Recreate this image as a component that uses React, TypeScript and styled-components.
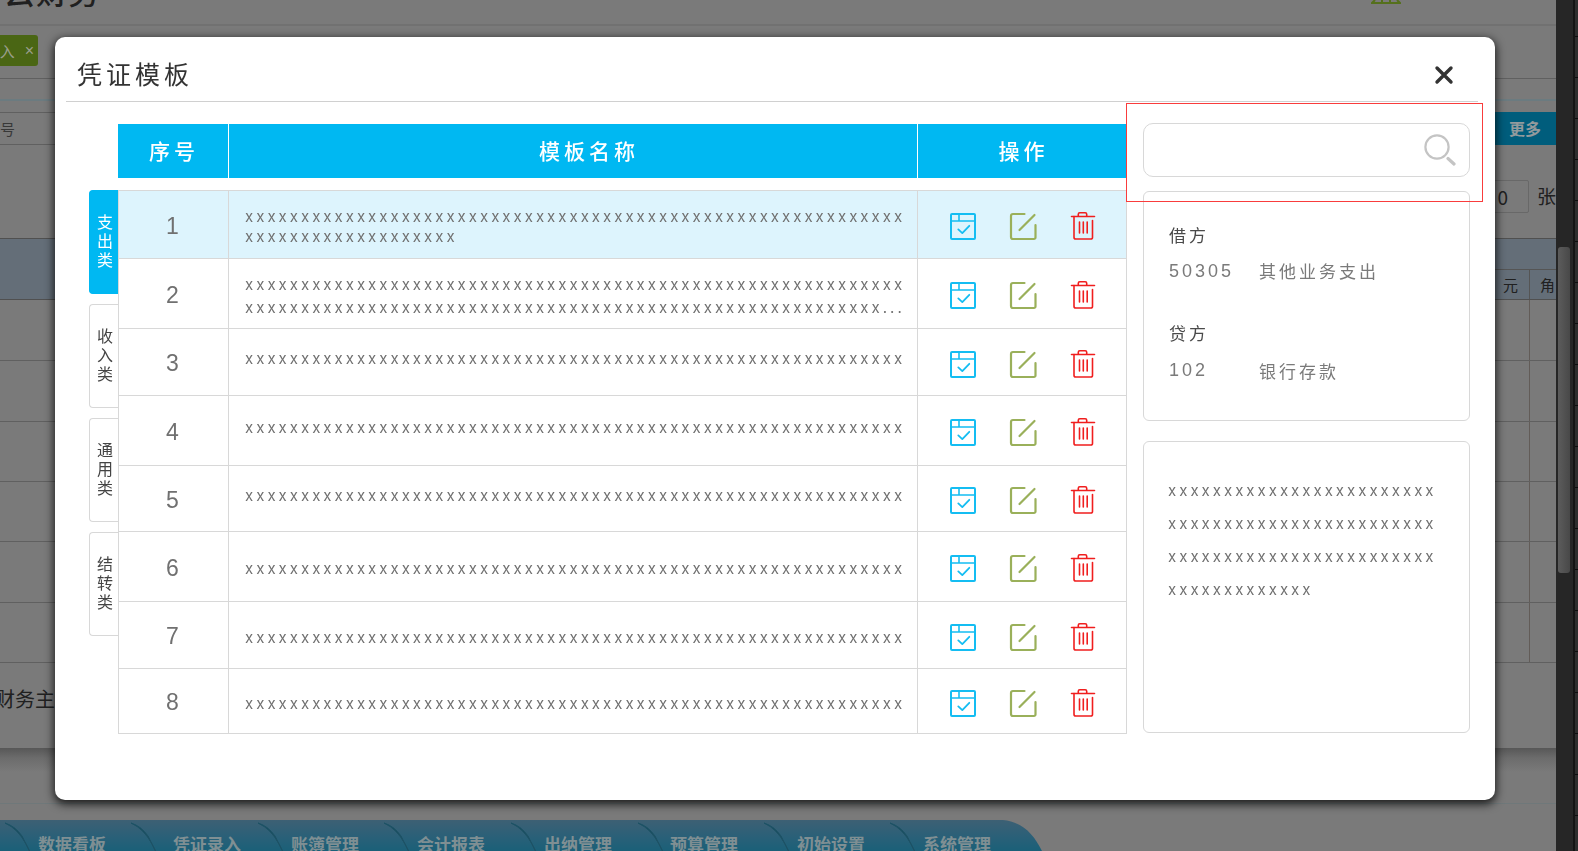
import React from 'react';
import styled, { createGlobalStyle, css } from 'styled-components';

const cjk = '"Noto Sans CJK SC", "Noto Sans", sans-serif';
const latin = 'Inter, "Noto Sans CJK SC", sans-serif';
const digits = '"Liberation Sans", "Noto Sans CJK SC", sans-serif';

const blue = '#00b8f2';
const line = '#d8d8d8';
const dimLine = '#606060';

const GlobalStyle = createGlobalStyle`
  * { box-sizing: border-box; }
  html, body { margin: 0; padding: 0; }
  body { font-family: ${cjk}; background: #7a7a7a; overflow: hidden; }
  button, input, table { font: inherit; letter-spacing: inherit; color: inherit; }
  button { border: 0; padding: 0; background: none; cursor: pointer; }
`;

/* ---------- page behind the dialog ---------- */

const Page = styled.div`
  display: grid;
  grid-template-columns: minmax(0, 1fr) 22px;
  height: 100vh;
  overflow: hidden;
`;

const Backstage = styled.div`
  display: flex;
  flex-direction: column;
  min-width: 0;
  overflow: hidden;
  background: #7a7a7a;
  color: #202020;
  > * { flex: none; }
`;

const BrandBar = styled.header`
  display: flex;
  align-items: flex-end;
  justify-content: space-between;
  height: 26px;
  padding: 0 155px 0 4px;
  overflow: hidden;
  border-bottom: 2px solid #717171;
`;

const Brand = styled.div`
  padding-bottom: 18px;
  font-size: 31px;
  font-weight: 500;
  line-height: 30px;
  letter-spacing: 1px;
`;

const HomeMark = styled.svg`
  display: block;
  width: 30px;
  height: 24px;
`;

const TabBar = styled.div`
  display: flex;
  height: 53px;
  padding-top: 9px;
  border-bottom: 1px solid ${dimLine};
`;

const OpenTab = styled.div`
  display: flex;
  align-items: center;
  justify-content: flex-end;
  width: 38px;
  height: 31px;
  padding-right: 4px;
  gap: 10px;
  overflow: hidden;
  border-radius: 0 3px 3px 0;
  background: #4a6614;
  color: #9a9f8c;
  font-size: 15px;
  line-height: 20px;
`;

const TabClose = styled.button`
  font-family: ${digits};
  font-size: 16px;
  line-height: 20px;
`;

const Strip = styled.div`
  height: 22px;
  border-bottom: 2px solid #6b7b80;
`;

const FilterBar = styled.div`
  display: flex;
  align-items: stretch;
  justify-content: space-between;
  height: 33px;
  margin-top: 11px;
  border-top: 1px solid ${dimLine};
  border-bottom: 1px solid ${dimLine};
  color: #383838;
  font-size: 15px;
  line-height: 31px;
`;

const MoreButton = styled.button`
  width: 80px;
  padding: 0 15px 0 0;
  margin: -1px 0;
  background: #005d7c;
  color: #929a9d;
  font-size: 16px;
  font-weight: 700;
  text-align: right;
`;

const CountRow = styled.label`
  display: flex;
  align-items: flex-start;
  justify-content: flex-end;
  gap: 8px;
  height: 93px;
  padding-top: 35px;
  font-size: 19px;
  line-height: 32px;
`;

const CountInput = styled.input`
  width: 60px;
  height: 33px;
  padding: 0 20px 0 0;
  border: 1px solid #686868;
  border-radius: 2px;
  background: transparent;
  text-align: right;
`;

const LedgerHead = styled.div`
  display: grid;
  grid-template-columns: 1fr 35px 27px;
  grid-template-rows: 31px 29px;
  border-top: 1px solid #505050;
  border-bottom: 1px solid #505050;
  background: #646e78;
  font-size: 15px;
  line-height: 30px;
`;

const HeadBlank = styled.div`
  grid-row: span 2;
`;

const HeadSpan = styled.div`
  grid-column: span 2;
  border-bottom: 1px solid #555;
`;

const HeadUnit = styled.div`
  border-left: 1px solid #555;
  text-align: right;
  padding-right: 1px;
  &:nth-child(3) { padding-right: 11px; }
`;

const LedgerRow = styled.div<{ $height: number }>`
  display: grid;
  grid-template-columns: 1fr 35px 27px;
  height: ${(p) => p.$height}px;
  border-bottom: 1px solid ${dimLine};
`;

const LedgerCell = styled.div`
  & + & { border-left: 1px solid #625c58; }
`;

const Signature = styled.div`
  height: 85px;
  padding-top: 22px;
  font-size: 20px;
  line-height: 28px;
  text-indent: -5px;
`;

const FootGap = styled.div`
  height: 56px;
  margin-bottom: 16px;
  border-bottom: 1px solid #6f787a;
  background: linear-gradient(#575757, #6c6c6c 10px, #7a7a7a 24px);
`;

const Nav = styled.nav`
  position: relative;
  display: flex;
  width: 1044px;
  height: 48px;
  padding-left: 38px;
`;

const NavShape = styled.svg`
  position: absolute;
  inset: 0;
  width: 100%;
  height: 100%;
`;

const NavLink = styled.a<{ $width: number }>`
  position: relative;
  flex: none;
  width: ${(p) => p.$width}px;
  color: #7f8f93;
  font-size: 17px;
  font-weight: 700;
  line-height: 48px;
  text-decoration: none;
`;

const Gutter = styled.div`
  display: grid;
  grid-template-columns: 17px 5px;
  background: #262626;
`;

const Track = styled.div`
  padding: 247px 3px 0 2px;
  background: #262626;
`;

const Thumb = styled.div`
  height: 326px;
  border-radius: 3px;
  background: linear-gradient(90deg, #5c5c5c, #484848);
`;

const Ruler = styled.div`
  border-left: 2px solid #141414;
  background: repeating-linear-gradient(#2e2e2e 0 36px, #0e0e0e 36px 37px, #2e2e2e 37px 41px);
`;

/* ---------- dialog ---------- */

const Overlay = styled.div`
  position: fixed;
  inset: 0;
  padding: 37px 83px 50px 55px;
`;

const Dialog = styled.section`
  padding-bottom: 66px;
  border-radius: 10px;
  background: #fff;
  box-shadow: 0 3px 10px 1px rgba(0, 0, 0, 0.8);
`;

const DialogHead = styled.header`
  display: flex;
  align-items: center;
  justify-content: space-between;
  height: 65px;
  margin: 0 17px 0 11px;
  padding: 11px 24px 0 11px;
  border-bottom: 1px solid #d0d0d0;
`;

const Title = styled.h1`
  margin: 0;
  padding-bottom: 4px;
  color: #333;
  font-size: 25px;
  font-weight: 400;
  line-height: 36px;
  letter-spacing: 4px;
`;

const CloseButton = styled.button`
  width: 20px;
  height: 20px;
  svg { display: block; }
`;

const DialogBody = styled.div`
  display: grid;
  grid-template-columns: 29px minmax(0, 1fr) 327px;
  align-items: start;
  padding: 21px 25px 0 34px;
`;

const Categories = styled.div`
  display: flex;
  flex-direction: column;
  gap: 10px;
  padding-top: 67px;
`;

const Category = styled.button<{ $active?: boolean }>`
  display: flex;
  align-items: center;
  justify-content: center;
  width: 29px;
  height: 104px;
  padding: 0 5px 3px 7px;
  border: 1px solid ${line};
  border-right: 0;
  border-radius: 4px 0 0 4px;
  color: #444;
  font-size: 16px;
  line-height: 19px;
  ${(p) => p.$active && css`
    border-color: ${blue};
    background: ${blue};
    color: #fff;
  `}
`;

const TableWrap = styled.div`
  min-width: 0;
  padding: 1px 16px 0 0;
`;

const TemplateTable = styled.table`
  width: 100%;
  table-layout: fixed;
  border-spacing: 0;
  color: #707070;
  tbody::before {
    content: '';
    display: block;
    height: 12px;
  }
`;

const HeadCell = styled.th<{ $width?: number; $indent?: number }>`
  width: ${(p) => (p.$width ? `${p.$width}px` : 'auto')};
  height: 54px;
  padding: 0 0 2px ${(p) => p.$indent ?? 2}px;
  background: ${blue};
  color: #fff;
  font-size: 21px;
  font-weight: 500;
  letter-spacing: 4px;
  & + & { border-left: 1px solid #fff; }
`;

const Row = styled.tr<{ $height: number; $active?: boolean }>`
  height: ${(p) => p.$height}px;
  background: ${(p) => (p.$active ? '#ddf4fd' : '#fff')};
  &:last-child td { border-bottom: 1px solid ${line}; }
`;

const Cell = styled.td`
  padding: 0;
  border-top: 1px solid ${line};
  border-left: 1px solid ${line};
  &:last-child { border-right: 1px solid ${line}; }
`;

const NumberCell = styled(Cell)`
  padding: 2px 2px 0 0;
  font-family: ${digits};
  font-size: 23px;
  line-height: 26px;
  text-align: center;
`;

const NameCell = styled(Cell)<{ $leading: number; $low: boolean }>`
  padding: ${(p) => (p.$low ? '4px 10px 0 16px' : '0 10px 7px 16px')};
  font-family: ${latin};
  font-size: 15px;
  line-height: ${(p) => p.$leading}px;
  letter-spacing: 3px;
  word-break: break-all;
`;

const Actions = styled.div`
  display: flex;
  justify-content: center;
  gap: 32px;
  padding: 3px 0 0 2px;
`;

const IconButton = styled.button`
  width: 28px;
  height: 30px;
  svg { display: block; }
`;

const Side = styled.aside`
  position: relative;
  display: flex;
  flex-direction: column;
`;

const SearchBox = styled.label`
  display: flex;
  align-items: center;
  height: 54px;
  padding-right: 13px;
  margin-bottom: 14px;
  border: 1px solid ${line};
  border-radius: 10px;
`;

const SearchInput = styled.input`
  flex: 1;
  min-width: 0;
  height: 100%;
  padding: 0 16px;
  border: 0;
  outline: 0;
  background: transparent;
  font-size: 17px;
`;

const Highlight = styled.div`
  position: absolute;
  top: -20px;
  right: -13px;
  left: -17px;
  height: 99px;
  border: 1px solid #f93c3c;
  pointer-events: none;
`;

const Card = styled.div`
  border: 1px solid ${line};
  border-radius: 6px;
`;

const EntryCard = styled(Card)`
  height: 230px;
  margin-bottom: 20px;
  padding: 27px 25px 0;
  font-size: 17px;
  letter-spacing: 3px;
`;

const EntryTitle = styled.h2`
  margin: 0;
  color: #4a4a4a;
  font-size: 17px;
  font-weight: 400;
  line-height: 32px;
`;

const Entry = styled.div`
  display: grid;
  grid-template-columns: 90px 1fr;
  color: #7a7a7a;
  line-height: 40px;
  & + h2 { margin-top: 26px; }
  & ~ & { line-height: 43px; }
`;

const Code = styled.span`
  font-family: ${digits};
  font-size: 18px;
`;

const NoteCard = styled(Card)`
  height: 292px;
  padding: 32px 28px 0 24px;
  color: #707070;
  font-family: ${latin};
  font-size: 15px;
  line-height: 33px;
  letter-spacing: 3px;
  word-break: break-all;
`;

/* ---------- icons ---------- */

const ApplyIcon = () => (
  <svg width="28" height="30" viewBox="0 0 28 30" fill="none" stroke="#14bdf2" strokeWidth="2" strokeLinecap="round" strokeLinejoin="round">
    <rect x="2" y="3" width="24" height="25" rx="1" />
    <path d="M2 10h24M10 3v7" strokeWidth="1.6" />
    <path d="M9.300 18.400l4 3.700 7-7.300" strokeWidth="1.8" />
  </svg>
);

const EditIcon = () => (
  <svg width="28" height="30" viewBox="0 0 28 30" fill="none" stroke="#9ab05a" strokeWidth="2.2" strokeLinecap="round" strokeLinejoin="round">
    <path d="M15.500 3H4a2 2 0 0 0-2 2v21a2 2 0 0 0 2 2h21a1.500 1.500 0 0 0 1.500-1.500V14" />
    <path d="M10.500 19L25.500 4" />
  </svg>
);

const TrashIcon = () => (
  <svg width="28" height="30" viewBox="0 0 28 30" fill="none" stroke="#f01e1e" strokeWidth="1.6" strokeLinecap="round" strokeLinejoin="round">
    <path d="M2.500 5.500h23M9.300 5V3.200a1.500 1.500 0 0 1 1.500-1.500h5.400a1.500 1.500 0 0 1 1.500 1.500V5" />
    <path d="M5 5.500v20.700a1.800 1.800 0 0 0 1.800 1.800H22a1.500 1.500 0 0 0 1.500-1.500V9.500" />
    <path d="M10.500 11v11M14.300 11v11M18.200 11v11" />
  </svg>
);

const X = (n: number) => 'x'.repeat(n);

const rows = [
  { height: 68, text: X(78), leading: 20, low: true },
  { height: 70, text: X(116) + '...', leading: 23, low: true },
  { height: 67, text: X(59), leading: 23, low: false },
  { height: 70, text: X(59), leading: 23, low: false },
  { height: 66, text: X(59), leading: 23, low: false },
  { height: 70, text: X(59), leading: 23, low: true },
  { height: 67, text: X(59), leading: 23, low: true },
  { height: 66, text: X(59), leading: 23, low: true },
];

const nav = [
  { label: '数据看板', width: 135 },
  { label: '凭证录入', width: 118 },
  { label: '账簿管理', width: 126 },
  { label: '会计报表', width: 127 },
  { label: '出纳管理', width: 126 },
  { label: '预算管理', width: 127 },
  { label: '初始设置', width: 126 },
  { label: '系统管理', width: 70 },
];

export default function App() {
  return (
    <>
      <GlobalStyle />
      <Page>
        <Backstage>
          <BrandBar>
            <Brand>云财务</Brand>
            <HomeMark viewBox="0 0 30 24" fill="none" stroke="#55701c" strokeWidth="2">
              <path d="M4 0L1 3h28L26 0M11 0v3M19 0v3" />
            </HomeMark>
          </BrandBar>
          <TabBar>
            <OpenTab>
              <span>入</span>
              <TabClose aria-label="关闭标签">×</TabClose>
            </OpenTab>
          </TabBar>
          <Strip />
          <FilterBar>
            <span>号</span>
            <MoreButton>更多</MoreButton>
          </FilterBar>
          <CountRow>
            <CountInput defaultValue="0" />
            张
          </CountRow>
          <LedgerHead>
            <HeadBlank />
            <HeadSpan />
            <HeadUnit>元</HeadUnit>
            <HeadUnit>角</HeadUnit>
          </LedgerHead>
          {[61, 61, 60, 60, 61, 60].map((h, i) => (
            <LedgerRow key={i} $height={h}>
              <LedgerCell />
              <LedgerCell />
              <LedgerCell />
            </LedgerRow>
          ))}
          <Signature>财务主</Signature>
          <FootGap />
          <Nav>
            <NavShape viewBox="0 0 1044 48" preserveAspectRatio="none" aria-hidden="true">
              <defs>
                <linearGradient id="navFill" x1="0" y1="0" x2="0" y2="1">
                  <stop offset="0" stopColor="#3d6074" />
                  <stop offset="0.35" stopColor="#2a6078" />
                  <stop offset="0.65" stopColor="#1a6078" />
                </linearGradient>
              </defs>
              <path d="M0 0H1003C1022 2 1033 13 1042 31L1044 48H0Z" fill="url(#navFill)" />
              {[5, 131, 258, 384, 511, 638, 764, 890].map((x) => (
                <path key={x} d={`M${x} 3Q${x + 10} 6 ${x + 17} 16L${x + 25} 32L${x + 21} 24Q${x + 13} 9 ${x} 3Z`} fill="#174c5e" stroke="#1d5265" strokeWidth="1" />
              ))}
            </NavShape>
            {nav.map((n) => (
              <NavLink key={n.label} href="#" $width={n.width}>{n.label}</NavLink>
            ))}
          </Nav>
        </Backstage>
        <Gutter>
          <Track><Thumb /></Track>
          <Ruler />
        </Gutter>
      </Page>

      <Overlay>
        <Dialog role="dialog" aria-labelledby="dialog-title">
          <DialogHead>
            <Title id="dialog-title">凭证模板</Title>
            <CloseButton aria-label="关闭">
              <svg width="20" height="20" viewBox="0 0 20 20" stroke="#333" strokeWidth="3.400" strokeLinecap="round">
                <path d="M3 3l14 14M17 3L3 17" />
              </svg>
            </CloseButton>
          </DialogHead>
          <DialogBody>
            <Categories>
              <Category $active>支出类</Category>
              <Category>收入类</Category>
              <Category>通用类</Category>
              <Category>结转类</Category>
            </Categories>
            <TableWrap>
              <TemplateTable>
                <thead>
                  <tr>
                    <HeadCell $width={110}>序号</HeadCell>
                    <HeadCell $indent={32}>模板名称</HeadCell>
                    <HeadCell $width={210}>操作</HeadCell>
                  </tr>
                </thead>
                <tbody>
                  {rows.map((r, i) => (
                    <Row key={i} $height={r.height} $active={i === 0}>
                      <NumberCell>{i + 1}</NumberCell>
                      <NameCell $leading={r.leading} $low={r.low}>{r.text}</NameCell>
                      <Cell>
                        <Actions>
                          <IconButton aria-label="使用"><ApplyIcon /></IconButton>
                          <IconButton aria-label="编辑"><EditIcon /></IconButton>
                          <IconButton aria-label="删除"><TrashIcon /></IconButton>
                        </Actions>
                      </Cell>
                    </Row>
                  ))}
                </tbody>
              </TemplateTable>
            </TableWrap>
            <Side>
              <SearchBox>
                <SearchInput type="text" aria-label="搜索模板" />
                <svg width="32" height="32" viewBox="0 0 32 32" fill="none" stroke="#c4c4c4" strokeLinecap="round">
                  <circle cx="13" cy="13" r="11.600" strokeWidth="2.200" />
                  <path d="M24 24.500l6 5.500" strokeWidth="3.200" />
                </svg>
              </SearchBox>
              <EntryCard>
                <EntryTitle>借方</EntryTitle>
                <Entry><Code>50305</Code><span>其他业务支出</span></Entry>
                <EntryTitle>贷方</EntryTitle>
                <Entry><Code>102</Code><span>银行存款</span></Entry>
              </EntryCard>
              <NoteCard>{X(85)}</NoteCard>
              <Highlight />
            </Side>
          </DialogBody>
        </Dialog>
      </Overlay>
    </>
  );
}
